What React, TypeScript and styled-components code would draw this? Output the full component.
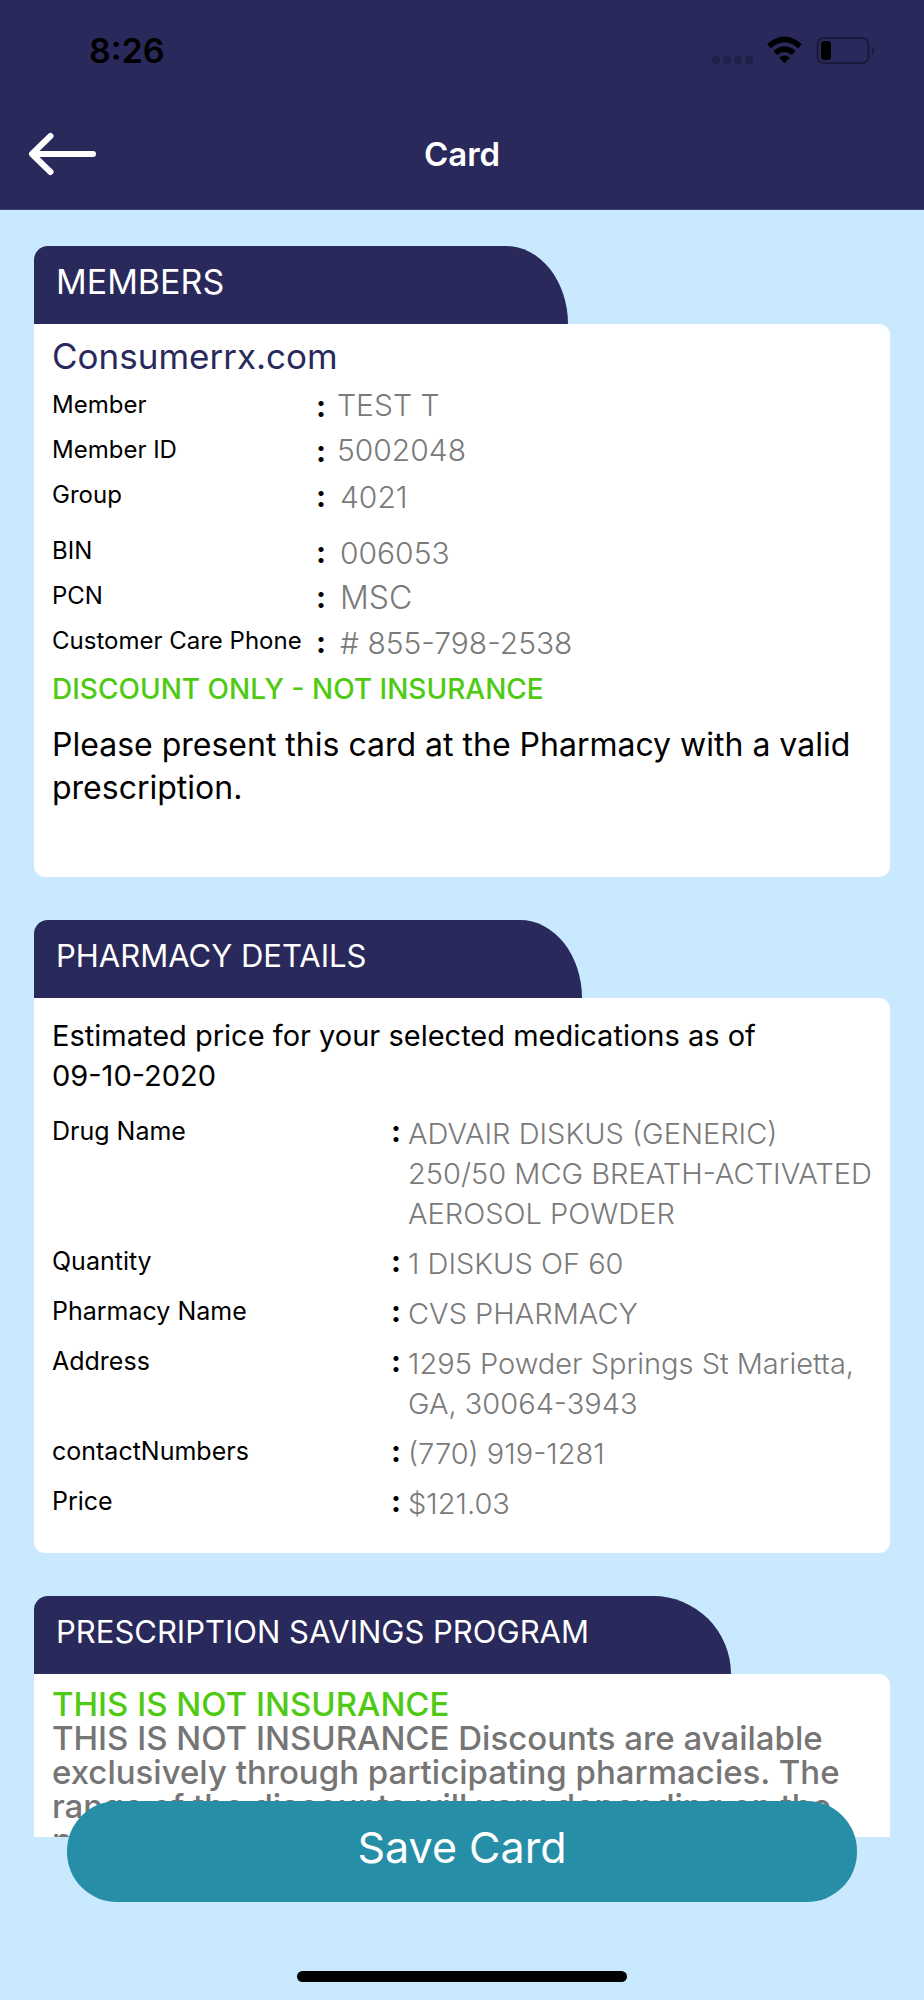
import React from "react";
import styled, { createGlobalStyle } from "styled-components";

const navy = "#29295b";
const sky = "#c9e9ff";
const green = "#4fca12";
const grey = "#7a7a7a";

const GlobalStyle = createGlobalStyle`
  * { box-sizing: border-box; }
  body {
    margin: 0;
    background: ${sky};
    color: #000;
    font-family: Inter, "Liberation Sans", sans-serif;
  }
`;

const Screen = styled.div`
  display: flex;
  flex-direction: column;
  height: 100vh;
  overflow: hidden;
`;

const Header = styled.header`
  flex: none;
  background: ${navy};
  border-bottom: 1px solid #3d3d6e;
`;

const StatusBar = styled.div`
  display: flex;
  align-items: center;
  justify-content: space-between;
  height: 101px;
  padding: 0 48px 0 89px;
`;

const Time = styled.time`
  font-size: 34px;
  line-height: 40px;
  font-weight: 600;
`;

const NavBar = styled.div`
  display: grid;
  grid-template-columns: 1fr auto 1fr;
  align-items: center;
  height: 108px;
  padding: 0 28px 2px;
`;

const BackButton = styled.button`
  justify-self: start;
  display: flex;
  padding: 0;
  border: 0;
  background: none;
`;

const PageTitle = styled.h1`
  margin: 0;
  color: #fff;
  font-size: 33px;
  line-height: 40px;
  font-weight: 600;
`;

const Content = styled.main`
  flex: 1;
  min-height: 0;
  overflow: hidden;
  display: flex;
  flex-direction: column;
  gap: 43px;
  padding: 36px 34px 0;
`;

const Section = styled.section`
  flex: none;
`;

const Tab = styled.h2<{ $width: string; $size: number; $curve: number }>`
  width: ${(p) => p.$width};
  height: 78px;
  margin: 0;
  padding: 0 22px;
  border-radius: 14px ${(p) => p.$curve}px 0 0 / 14px 78px 0 0;
  background: ${navy};
  color: #fff;
  font-size: ${(p) => p.$size}px;
  line-height: 71px;
  font-weight: 400;
  white-space: nowrap;
`;

const Card = styled.div<{ $padding: string }>`
  padding: ${(p) => p.$padding};
  border-radius: 0 11px 11px 11px;
  background: #fff;
`;

const Brand = styled.h3`
  margin: 0;
  color: ${navy};
  font-size: 35px;
  line-height: 48px;
  font-weight: 400;
`;

const MemberList = styled.dl`
  margin: 0;
  padding-top: 2px;
`;

const MemberRow = styled.div<{ $height: number }>`
  display: grid;
  grid-template-columns: 264fr 21px 545fr;
  height: ${(p) => p.$height}px;
`;

const Label = styled.dt`
  font-size: 24px;
  line-height: 46px;
  white-space: nowrap;
`;

const Colon = styled.span`
  font-size: 30px;
  line-height: 48px;
  font-weight: 700;
`;

const MemberValue = styled.dd<{ $lowered?: boolean; $large?: boolean }>`
  margin: 0;
  padding-left: ${(p) => (p.$lowered ? 3 : 0)}px;
  color: ${grey};
  font-size: ${(p) => (p.$large ? 32 : 30)}px;
  line-height: ${(p) => (p.$lowered ? 50 : 47)}px;
  font-weight: 300;
`;

const Disclaimer = styled.p`
  margin: 0;
  color: ${green};
  font-size: 28px;
  line-height: 52px;
  font-weight: 500;
`;

const Instruction = styled.p`
  margin: 8px 0 0;
  font-size: 32px;
  line-height: 43px;
`;

const Estimate = styled.p`
  margin: 0 0 15px;
  font-size: 29px;
  line-height: 40px;
`;

const Nowrap = styled.span`
  white-space: nowrap;
`;

const DetailList = styled.dl`
  display: flex;
  flex-direction: column;
  gap: 7px;
  margin: 0;
`;

const DetailRow = styled.div`
  display: grid;
  grid-template-columns: 339fr 17px 474fr;
`;

const DetailLabel = styled(Label)`
  font-size: 25px;
  line-height: 40px;
`;

const DetailColon = styled(Colon)`
  line-height: 40px;
`;

const DetailValue = styled.dd`
  margin: 0;
  padding-top: 3px;
  color: ${grey};
  font-size: 29px;
  line-height: 40px;
  font-weight: 300;
`;

const Terms = styled.p<{ $color: string }>`
  margin: 0;
  color: ${(p) => p.$color};
  font-size: 33px;
  line-height: 34px;
  font-weight: 500;
`;

const Footer = styled.footer`
  flex: none;
  display: flex;
  flex-direction: column;
  align-items: center;
  height: 163px;
`;

const SaveButton = styled.button`
  position: relative;
  flex: none;
  width: calc(100% - 134px);
  height: 101px;
  margin-top: -36px;
  padding: 0 0 10px;
  border: 0;
  border-radius: 50px;
  background: #278ea8;
  color: #fff;
  font-family: inherit;
  font-size: 43px;
  line-height: 50px;
  font-weight: 400;
`;

const HomeIndicator = styled.div`
  flex: none;
  width: 330px;
  height: 11px;
  margin-top: 69px;
  border-radius: 6px;
  background: #000;
`;

type MemberField = { label: string; value: string; height: number; lowered?: boolean; large?: boolean };

const memberFields: MemberField[] = [
  { label: "Member", value: "TEST T", height: 45 },
  { label: "Member ID", value: "5002048", height: 45 },
  { label: "Group", value: "4021", height: 56, lowered: true },
  { label: "BIN", value: "006053", height: 45, lowered: true },
  { label: "PCN", value: "MSC", height: 45, lowered: true, large: true },
  { label: "Customer Care Phone", value: "# 855-798-2538", height: 45, lowered: true },
];

const pharmacyFields: [string, string][] = [
  ["Drug Name", "ADVAIR DISKUS (GENERIC) 250/50 MCG BREATH-ACTIVATED AEROSOL POWDER"],
  ["Quantity", "1 DISKUS OF 60"],
  ["Pharmacy Name", "CVS PHARMACY"],
  ["Address", "1295 Powder Springs St Marietta, GA, 30064-3943"],
  ["contactNumbers", "(770) 919-1281"],
  ["Price", "$121.03"],
];

function StatusIcons() {
  return (
    <svg width="166" height="30" viewBox="0 0 166 30" aria-hidden="true">
      <g fill="#20204a">
        <rect x="2" y="20" width="8" height="8" rx="3" />
        <rect x="13" y="20" width="8" height="8" rx="3" />
        <rect x="24" y="20" width="8" height="8" rx="3" />
        <rect x="35" y="20" width="8" height="8" rx="3" />
      </g>
      <g fill="none" stroke="#000" strokeWidth="5.4">
        <path d="M59 10.2Q74.500 -3.400 90 10.200" />
        <path d="M65.200 17Q74.500 9.200 83.800 17" />
      </g>
      <path d="M69.300 21.800Q74.500 17.400 79.700 21.800L74.500 27.200Z" />
      <rect x="107.500" y="2" width="51" height="25" rx="6" fill="none" stroke="#1a1a3a" strokeWidth="2" />
      <rect x="111" y="5" width="10" height="19" rx="3.500" />
      <path d="M162 10Q165.500 14.500 162 19.500Z" fill="#1a1a3a" />
    </svg>
  );
}

export default function App() {
  return (
    <Screen>
      <GlobalStyle />
      <Header>
        <StatusBar>
          <Time>8:26</Time>
          <StatusIcons />
        </StatusBar>
        <NavBar>
          <BackButton type="button" aria-label="Back">
            <svg width="70" height="44" viewBox="0 0 70 44" fill="none" stroke="#fff" strokeWidth="6" strokeLinecap="round" strokeLinejoin="round">
              <path d="M22.500 4L4 22L22.500 40M5 22H65" />
            </svg>
          </BackButton>
          <PageTitle>Card</PageTitle>
        </NavBar>
      </Header>

      <Content>
        <Section>
          <Tab $width="62.4%" $size={34} $curve={62}>MEMBERS</Tab>
          <Card $padding="8px 8px 68px 18px">
            <Brand>Consumerrx.com</Brand>
            <MemberList>
              {memberFields.map((f) => (
                <MemberRow key={f.label} $height={f.height}>
                  <Label>{f.label}</Label>
                  <Colon>:</Colon>
                  <MemberValue $lowered={f.lowered} $large={f.large}>{f.value}</MemberValue>
                </MemberRow>
              ))}
            </MemberList>
            <Disclaimer>DISCOUNT ONLY - NOT INSURANCE</Disclaimer>
            <Instruction>Please present this card at the Pharmacy with a valid prescription.</Instruction>
          </Card>
        </Section>

        <Section>
          <Tab $width="64%" $size={31} $curve={62}>PHARMACY DETAILS</Tab>
          <Card $padding="18px 8px 29px 18px">
            <Estimate>
              Estimated price for your selected medications as of <Nowrap>09-10-2020</Nowrap>
            </Estimate>
            <DetailList>
              {pharmacyFields.map(([label, value]) => (
                <DetailRow key={label}>
                  <DetailLabel>{label}</DetailLabel>
                  <DetailColon>:</DetailColon>
                  <DetailValue>{value}</DetailValue>
                </DetailRow>
              ))}
            </DetailList>
          </Card>
        </Section>

        <Section>
          <Tab $width="81.4%" $size={31} $curve={78}>PRESCRIPTION SAVINGS PROGRAM</Tab>
          <Card $padding="13px 8px 27px 18px">
            <Terms $color={green}>THIS IS NOT INSURANCE</Terms>
            <Terms $color="#757575">
              THIS IS NOT INSURANCE Discounts are available exclusively through participating pharmacies. The range of the discounts will vary depending on the pharmacy
            </Terms>
          </Card>
        </Section>
      </Content>

      <Footer>
        <SaveButton type="button">Save Card</SaveButton>
        <HomeIndicator />
      </Footer>
    </Screen>
  );
}
